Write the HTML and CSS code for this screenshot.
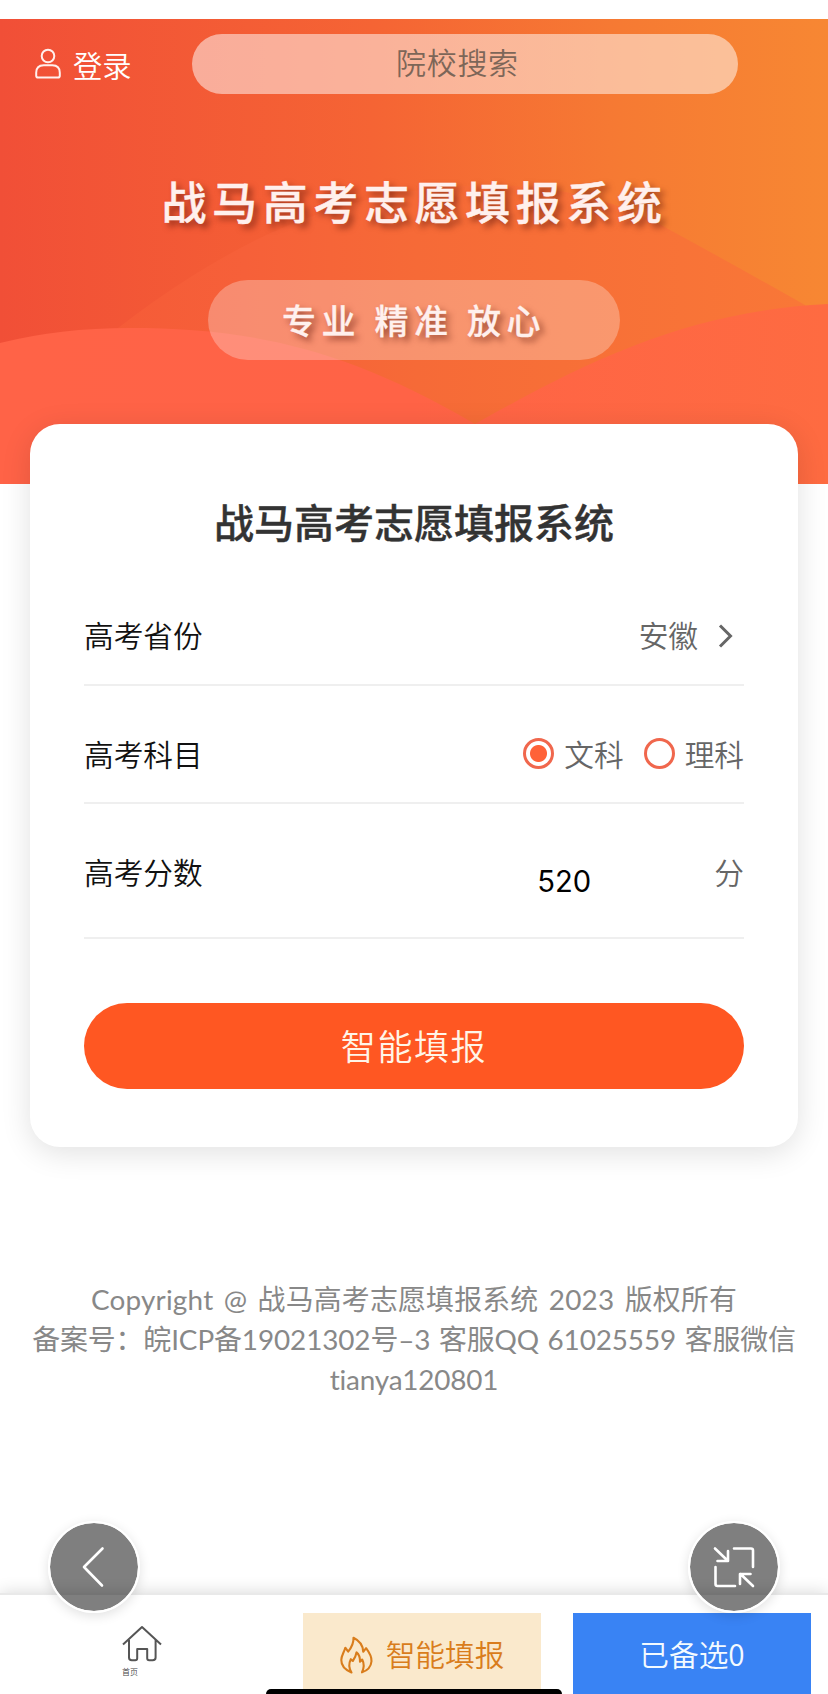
FILE: index.html
```html
<!DOCTYPE html>
<html lang="zh-CN">
<head>
<meta charset="utf-8">
<title>战马高考志愿填报系统</title>
<link rel="stylesheet" href="styles.css">
</head>
<body>
<div class="app">
  <header class="hero">
    <svg class="hero-waves" viewBox="0 0 828 465" aria-hidden="true">
      <defs>
        <linearGradient id="back" gradientUnits="userSpaceOnUse" x1="80" x2="828" y1="0" y2="0"><stop offset="0" stop-color="#f55a37"/><stop offset=".22" stop-color="#f66039"/><stop offset=".45" stop-color="#f66a37"/><stop offset="1" stop-color="#f97837"/></linearGradient>
        <linearGradient id="front" gradientUnits="userSpaceOnUse" x1="0" x2="828" y1="0" y2="0"><stop offset="0" stop-color="#ff6347"/><stop offset=".5" stop-color="#ff6346"/><stop offset="1" stop-color="#fe6b41"/></linearGradient>
      </defs>
      <path fill="url(#back)" d="M80 340Q168 265 256 221C390 155 560 145 670 211Q738 248 805 286L828 340V465H80Z"/>
      <path fill="url(#front)" d="M0 324Q60 309 130 309C240 309 340 325 475 405C590 340 690 292 828 285V465H0Z"/>
    </svg>
    <div class="topbar">
      <a class="login">
        <svg width="28" height="32" viewBox="0 0 28 32" fill="none" stroke="currentColor" stroke-width="2"><circle cx="14" cy="8" r="6.3"/><path d="M4 29.5h20q1.800 0 1.800-1.800v-3q0-7.500-7.500-7.500H9.700q-7.500 0-7.500 7.500v3q0 1.800 1.800 1.800z"/></svg>
        <span>登录</span>
      </a>
      <div class="search">院校搜索</div>
    </div>
    <h1 class="hero-title">战马高考志愿填报系统</h1>
    <p class="slogan">专业 精准 放心</p>
  </header>

  <main class="card">
    <h2 class="card-title">战马高考志愿填报系统</h2>
    <div class="row row-province">
      <span class="label">高考省份</span>
      <span class="value">安徽
        <svg class="chevron" width="16" height="24" viewBox="0 0 16 24" fill="none" stroke="currentColor" stroke-width="3"><path d="M2 1.500 12.500 12 2 22.500"/></svg>
      </span>
    </div>
    <div class="row row-subject">
      <span class="label">高考科目</span>
      <span class="value options">
        <span class="option"><i class="radio checked"></i>文科</span>
        <span class="option"><i class="radio"></i>理科</span>
      </span>
    </div>
    <div class="row row-score">
      <span class="label">高考分数</span>
      <span class="value"><span class="score">520</span>分</span>
    </div>
    <button class="submit">智能填报</button>
  </main>

  <footer class="legal">
    <p class="legal-copyright">Copyright @ 战马高考志愿填报系统 2023 版权所有</p>
    <p class="legal-record">备案号：皖ICP备19021302号–3 客服QQ 61025559 客服微信</p>
    <p class="legal-contact">tianya120801</p>
  </footer>

  <nav class="tabbar">
    <a class="home">
      <svg width="40" height="37" viewBox="0 0 40 37" fill="none" stroke="#555" stroke-width="2" stroke-linejoin="round"><path d="M1 19.500 20 2l19 17.500M7 15v17.500q0 2.800 2.800 2.800h3.400q2 0 2-2V24h10v9.300q0 2 2 2h3.400q3 0 3-2.800V15"/></svg>
      <span>首页</span>
    </a>
    <a class="smart">
      <svg width="33" height="38" viewBox="0 0 33 38" fill="none" stroke="#d97d1c" stroke-width="2.100" stroke-linejoin="round"><path d="M11.500 36.500C4.500 33.500 1.200 29 1.300 24c.1-4.500 2.700-7.500 4-12.300l2.900 4C11.500 11.500 13.800 7.500 13.500 1.800c6 2.900 9.500 7.200 9.700 14l2.900-3.600c3.600 4.800 5.700 8.800 5.400 13-.5 5.400-4 9.300-9.500 11.100 2.200-4.700 2.300-8.800.2-12.800l-2.200 2.200c.1-4.200-.8-7.200-3.500-9.300-.6 3.900-1.900 6.200-3.700 8.600l-2-1.800c-2.400 4.700-2 8.900.7 13.300z"/></svg>
      <span>智能填报</span>
    </a>
    <a class="picked">已备选0</a>
  </nav>

  <div class="home-indicator"></div>
  <button class="float float-back" aria-label="返回">
    <svg width="88" height="88" viewBox="0 0 88 88" fill="none" stroke="#fff" stroke-width="2.600" stroke-linecap="round" stroke-linejoin="round"><path d="M52.500 25.500 34 44l18 18.500"/></svg>
  </button>
  <button class="float float-shrink" aria-label="缩小">
    <svg width="88" height="88" viewBox="0 0 88 88" fill="none" stroke="#fff" stroke-width="2.600" stroke-linecap="round" stroke-linejoin="round"><path d="M44 25.500h17q2 0 2 2V44M25.500 44v17q0 2 2 2H45M25 25.500l12.500 12M38 28v10H27.500M63 63 50.500 51M50 61V51h10.500"/></svg>
  </button>
</div>
</body>
</html>
```
FILE: styles.css
```css
* { box-sizing: border-box; }
body {
  margin: 0;
  background: #fff;
  font-family: "Noto Sans CJK SC", sans-serif;
  font-size: 29.7px;
  font-weight: 350;
  line-height: 1;
}
h1, h2, p { margin: 0; }
button { border: 0; padding: 0; font-family: inherit; font-weight: inherit; }
svg { display: block; }

.app {
  position: relative;
  display: flex;
  flex-direction: column;
  width: 828px;
  height: 1694px;
  padding-top: 19px;
  overflow: hidden;
}

.hero {
  position: relative;
  flex: none;
  display: flex;
  flex-direction: column;
  align-items: center;
  height: 465px;
  padding-top: 15px;
  color: #fff0ed;
  background: linear-gradient(90deg, #f14f37, #f56434 45%, #f67a33 75%, #f78733);
}
.hero-waves { position: absolute; left: 0; top: 0; width: 828px; height: 465px; }
.topbar, .hero-title, .slogan { position: relative; }
.topbar { display: flex; align-self: stretch; height: 60px; padding-left: 34px; }
.login { display: flex; gap: 11px; width: 158px; padding-top: 14px; font-size: 29.300px; }
.login span { padding-top: 2px; color: #fff; }
.search {
  width: 546px;
  height: 60px;
  border-radius: 30px;
  background: rgba(255, 255, 255, .5);
  color: #7d6658;
  font-size: 30px;
  letter-spacing: .7px;
  line-height: 55px;
  padding-left: 204px;
}
.hero-title {
  margin-top: 77px;
  padding-left: 1px;
  font-size: 45px;
  font-weight: 500;
  line-height: 60px;
  letter-spacing: 5.600px;
  -webkit-text-stroke: .4px currentColor;
  text-shadow: 4px 4px 6px rgba(90, 20, 10, .6);
}
.slogan {
  width: 412px;
  height: 80px;
  margin-top: 49px;
  padding-left: 74px;
  border-radius: 40px;
  background: rgba(255, 255, 255, .28);
  font-size: 34px;
  font-weight: 500;
  line-height: 79px;
  letter-spacing: 5.600px;
  white-space: nowrap;
  -webkit-text-stroke: .3px currentColor;
  text-shadow: 4px 4px 6px rgba(90, 20, 10, .6);
}

.card {
  position: relative;
  flex: none;
  height: 723px;
  margin: -60px 30px 0;
  padding: 68px 54px 0;
  border-radius: 30px;
  background: #fff;
  box-shadow: 0 6px 30px rgba(0, 0, 0, .12);
}
.card-title {
  font-size: 40px;
  font-weight: 500;
  line-height: 58px;
  text-align: center;
  color: #333;
  -webkit-text-stroke: .4px currentColor;
}
.row {
  display: flex;
  justify-content: space-between;
  align-items: center;
  border-bottom: 2px solid #efefef;
}
.row-province { height: 96px; margin-top: 40px; padding-bottom: 5px; }
.row-subject { height: 118px; padding-top: 20px; }
.row-score { height: 135px; padding-top: 2px; }
.label { color: #111; }
.value { display: flex; align-items: center; color: #666; }
.chevron { margin: 3px 10px 0 20px; }
.options { gap: 21px; }
.option { display: flex; align-items: center; gap: 9px; }
.radio {
  width: 31px;
  height: 31px;
  margin: -1px 1px 0 -1px;
  border: 3.500px solid #f0674d;
  border-radius: 50%;
}
.radio.checked { background: radial-gradient(circle, #ff6238 8px, #fff 9px); border-width: 3px; }
.score {
  width: 177px;
  padding-top: 21px;
  font-family: Inter, "Liberation Sans", sans-serif;
  font-size: 29.200px;
  font-weight: 400;
  color: #000;
}
.submit {
  display: block;
  width: 660px;
  height: 86px;
  margin-top: 64px;
  padding-bottom: 4px;
  border-radius: 43px;
  background: #ff5722;
  color: #fff5e8;
  font-size: 35px;
  letter-spacing: 1.600px;
}

.legal {
  flex: 1;
  padding-top: 132px;
  font-family: Lato, "Noto Sans CJK SC", sans-serif;
  font-size: 27.900px;
  font-weight: 400;
  font-variant-ligatures: none;
  line-height: 40px;
  text-align: center;
  white-space: nowrap;
  color: #888;
}
.legal-copyright { letter-spacing: .2px; word-spacing: 3px; }
.legal-record { letter-spacing: -.1px; word-spacing: 1.500px; }
.legal-contact { letter-spacing: -.2px; }

.tabbar {
  position: relative;
  flex: none;
  display: flex;
  height: 101px;
  border-top: 2px solid #e9e9e9;
  background: #fff;
  box-shadow: 0 0 16px rgba(0, 0, 0, .16);
}
.home { width: 303px; padding: 30px 0 0 122px; font-size: 8px; color: #444; }
.home span { display: block; margin-top: 6px; }
.smart, .picked {
  display: flex;
  align-items: center;
  justify-content: center;
  width: 238px;
  height: 81px;
  margin-top: 18px;
}
.smart { gap: 13px; background: #fae9cc; color: #d97d1c; }
.smart svg { margin-top: 2px; }
.picked { margin-left: 32px; background: #3983f4; color: #f3faff; }

.home-indicator {
  position: absolute;
  left: 266px;
  bottom: 0;
  width: 296px;
  height: 5px;
  border-radius: 6px 6px 0 0;
  background: #000;
}
.float {
  position: absolute;
  top: 1521px;
  width: 92px;
  height: 92px;
  border: 2px solid #fff;
  border-radius: 50%;
  background: rgba(0, 0, 0, .5);
  background-clip: padding-box;
  box-shadow: 0 3px 12px rgba(0, 0, 0, .12);
}
.float-back { left: 48px; }
.float-shrink { left: 688px; }
```
